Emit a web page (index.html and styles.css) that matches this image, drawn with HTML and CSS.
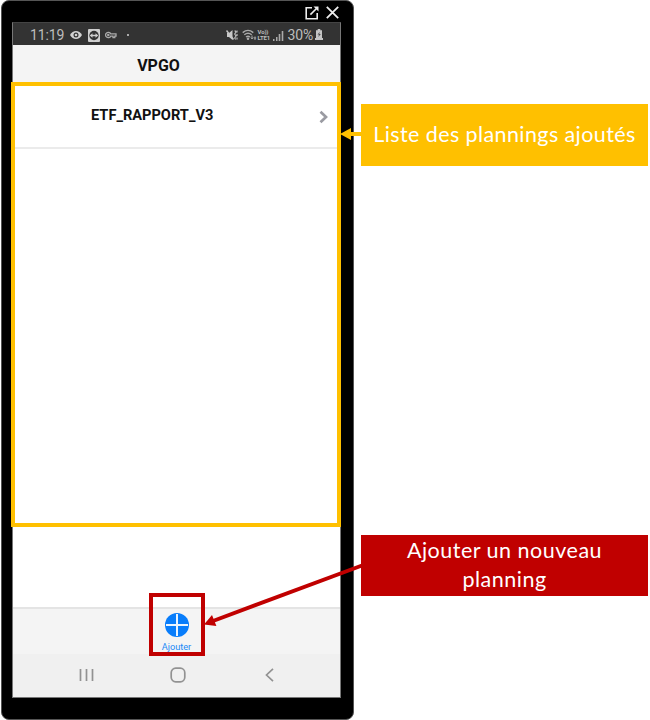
FILE: index.html
```html
<!DOCTYPE html>
<html lang="fr">
<head>
<meta charset="utf-8">
<title>VPGO</title>
<link rel="stylesheet" href="styles.css">
</head>
<body>
<main class="stage">
  <section class="phone">
    <div class="window-bar">
      <svg width="14" height="14" viewBox="0 0 14 14" fill="none" stroke="#eee" stroke-width="1.6"><path d="M7 1.8H1.2v11h11V7"/><path d="M5.400 8.600L12 2"/><path d="M8.500 .5h5v5z" fill="#eee" stroke="none"/></svg>
      <svg width="13" height="13" viewBox="0 0 13 13" fill="none" stroke="#eee" stroke-width="1.800"><path d="M.8.8l11.400 11.400M12.200.8L.8 12.200"/></svg>
    </div>
    <div class="screen">
      <div class="status">
        <div class="status-left">
          <span class="clock">11:19</span>
          <svg class="eye" width="12" height="10" viewBox="0 0 12 10"><path d="M0 5Q2.300 1 6 1t6 4Q9.700 9 6 9T0 5z" fill="#d2d2d2"/><circle cx="6" cy="5" r="2.500" fill="#333"/><circle cx="6" cy="5" r="1.300" fill="#d2d2d2"/></svg>
          <svg class="remote" width="12" height="13" viewBox="0 0 12 13"><rect width="12" height="13" rx="1" fill="#cfcfcf"/><circle cx="6" cy="6.500" r="4.700" fill="#333"/><path d="M1.700 6.500l2.800-2.300v1.600h3V4.200l2.800 2.300-2.800 2.300V7.200h-3v1.600z" fill="#cfcfcf"/></svg>
          <svg class="key" width="12" height="8" viewBox="0 0 12 8" fill="none" stroke="#aaa" stroke-width="1.300"><path d="M5.700 2.800H11v2.400H9.800v1.300H8V5.200H5.700A2.700 2.700 0 1 1 5.700 2.800z"/><circle cx="3.300" cy="4" r=".6"/></svg>
          <span class="dot"></span>
        </div>
        <div class="status-right">
          <svg width="12" height="12" viewBox="0 0 12 12"><path d="M1 4h2l3.500-3v10L3 8H1z" fill="#c8c8c8"/><path d="M.5 1.500l7 9" stroke="#c8c8c8" stroke-width="1.500"/><path d="M8.700 1.500L10 3 8.700 5 10 7 8.700 9l1 1.500M11 1.500v2M11 5v2M11 8.500v2" fill="none" stroke="#bbb" stroke-width="1.200"/></svg>
          <svg class="wifi" width="15" height="12" viewBox="0 0 15 12" fill="none" stroke="#aaa" stroke-width="1.400"><path d="M.7 3.600q5.300-4.400 10.600 0M2.300 5.800q3.700-3 7.400 0M4 8q2-1.600 4 0"/><circle cx="6" cy="9.700" r=".6" fill="#aaa"/><path d="M10 6.500v3M13 7.500v3.500M8.800 8.500L10 10l1.200-1.500M11.800 9h2.400" stroke-width="1"/></svg>
          <span class="lte"><span>Vo))</span><span>LTE1</span></span>
          <svg class="signal" width="11" height="11" viewBox="0 0 11 11" fill="#aaa"><path d="M0 9h1.500v2H0zM3 7h1.500v4H3zM5.700 4h1.600v7H5.700zM8.700 1h1.600v10H8.700z"/></svg>
          <span class="percent">30%</span>
          <svg class="battery" width="8" height="12" viewBox="0 0 8 12"><path d="M2.700 0h2.600v1.200H7V9H1V1.200h1.700zM0 9h8v2H0z" fill="#c4c4c4"/><path d="M4.800 3L2.500 5.500H4L3.300 8 5.800 5H4.200z" fill="#444"/></svg>
        </div>
      </div>
      <header class="title">VPGO</header>
      <div class="list">
        <div class="row">
          <span class="name">ETF_RAPPORT_V3</span>
          <svg width="10" height="14" viewBox="0 0 10 14" fill="none" stroke="#9a9ba2" stroke-width="2.700"><path d="M1.500 1.800L7 7l-5.500 5.200"/></svg>
        </div>
      </div>
      <div class="tabs">
        <svg width="24" height="24" viewBox="0 0 24 24"><circle cx="12" cy="12" r="12" fill="#087dfb"/><path d="M12 1v22M1 12h22" stroke="#e9f4ff" stroke-width="2"/></svg>
        <span>Ajouter</span>
      </div>
      <div class="nav">
        <svg width="15" height="14" viewBox="0 0 15 14" stroke="#929292" stroke-width="1.700"><path d="M1.500 1v12M7.500 1v12M13.500 1v12"/></svg>
        <svg class="home" width="16" height="16" viewBox="0 0 16 16" fill="none" stroke="#929292" stroke-width="1.700"><rect x="1.200" y="1.200" width="13.600" height="13.600" rx="4.500"/></svg>
        <svg width="9" height="14" viewBox="0 0 9 14" fill="none" stroke="#929292" stroke-width="1.700"><path d="M8 .8L1.500 7 8 13.200"/></svg>
      </div>
    </div>
  </section>

  <div class="frame frame-list"></div>
  <div class="frame frame-add"></div>
  <div class="note note-list"><span>Liste des plannings ajoutés</span></div>
  <div class="note note-add"><span>Ajouter un nouveau</span><span>planning</span></div>
  <svg class="arrows" width="650" height="720" viewBox="0 0 650 720">
    <path d="M362 134H350" stroke="#ffc000" stroke-width="4"/>
    <path d="M340 134l11-6v12z" fill="#ffc000"/>
    <path d="M362 565.500L213 621" stroke="#c00000" stroke-width="4"/>
    <path d="M204 624.500L212 615l4.400 11z" fill="#c00000"/>
  </svg>
</main>
</body>
</html>
```

FILE: styles.css
```css
* { box-sizing: border-box; }

body {
  margin: 0;
  background: #fff;
  font-family: Roboto, sans-serif;
}

svg { display: block; flex: none; }

.stage {
  position: relative;
  width: 650px;
  height: 720px;
  overflow: hidden;
}

.phone {
  width: 353px;
  height: 720px;
  margin-left: 1px;
  padding: 0 12px 0 11px;
  background: #000;
  border: 1px solid #555;
  border-radius: 8px;
}

.window-bar {
  height: 21px;
  display: flex;
  justify-content: flex-end;
  align-items: center;
  gap: 7px;
  padding: 2px 2px 0 0;
}

.screen {
  height: 676px;
  width: 329px;
  margin-left: -1px;
  display: flex;
  flex-direction: column;
  background: #fff;
  border: 1px solid #777;
  border-top-color: #444;
}

.status {
  height: 22px;
  flex: none;
  display: flex;
  justify-content: space-between;
  align-items: center;
  padding: 2px 17px 0 17px;
  background: #333;
  color: #bdbdbd;
  font-size: 14px;
}

.status-left, .status-right { display: flex; align-items: center; }
.clock { width: 40px; letter-spacing: -0.1px; }
.remote { margin-left: 6px; }
.key { margin-left: 5px; }
.dot { width: 2px; height: 2px; margin-left: 10px; background: #aaa; }
.wifi { margin-left: 4px; }
.lte {
  width: 14px;
  margin-left: 1px;
  display: flex;
  flex-direction: column;
  font-size: 6px;
  font-weight: 700;
  line-height: 6px;
  letter-spacing: -0.2px;
}
.signal { margin-left: 1px; }
.percent { margin-left: 4px; letter-spacing: -0.2px; }
.battery { margin-left: 2px; }

.title {
  height: 38px;
  flex: none;
  padding-right: 36px;
  background: #f4f4f4;
  color: #111;
  font-size: 16px;
  font-weight: 700;
  line-height: 41px;
  text-align: center;
}

.list { flex: 1; background: #fff; }

.row {
  height: 66px;
  display: flex;
  justify-content: space-between;
  align-items: center;
  padding: 4px 11px 0 78px;
  border-bottom: 2px solid #ebebeb;
}
.name { padding-bottom: 4px; color: #111; font-size: 14.6px; font-weight: 700; }

.tabs {
  height: 47px;
  flex: none;
  display: flex;
  flex-direction: column;
  align-items: center;
  padding: 4px 0 0 0;
  background: #f4f4f4;
  border-top: 2px solid #e4e4e4;
  color: #2389f6;
  font-size: 9.2px;
  line-height: 11px;
}
.tabs span { margin-top: 4px; }

.nav {
  height: 43px;
  flex: none;
  display: flex;
  justify-content: space-between;
  align-items: center;
  padding: 0 66px 2px 66px;
  background: #f0f0f0;
}
.home { margin-right: 3px; }

.frame { position: absolute; border: 4px solid; }
.frame-list { left: 11px; top: 82px; width: 330px; height: 445px; border-color: #ffc000; }
.frame-add { left: 149px; top: 593px; width: 56px; height: 63px; border-color: #c00000; }

.note {
  position: absolute;
  left: 361px;
  width: 287px;
  display: flex;
  flex-direction: column;
  align-items: center;
  justify-content: center;
  color: #fff;
  font-family: Lato, sans-serif;
  font-size: 21.5px;
  line-height: 29px;
  letter-spacing: 0.4px;
  white-space: nowrap;
}
.note-list { top: 104px; height: 62px; padding-bottom: 1px; background: #ffc000; }
.note-add { top: 535px; height: 61px; padding-bottom: 1px; letter-spacing: 0.5px; background: #c00000; }

.arrows { position: absolute; left: 0; top: 0; }
```
